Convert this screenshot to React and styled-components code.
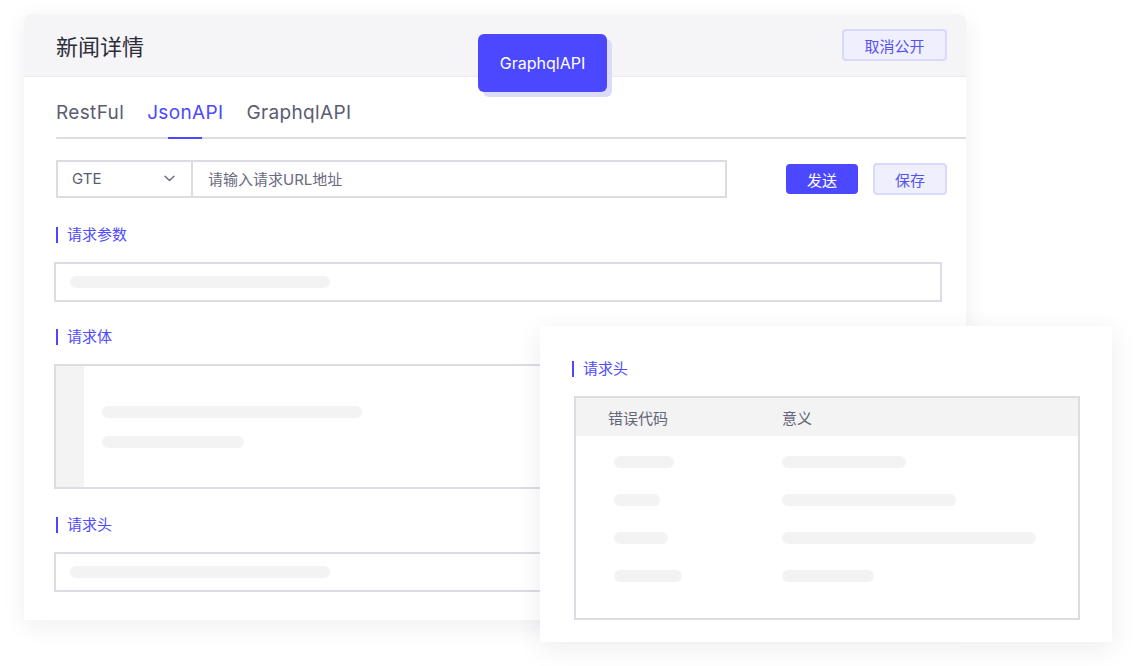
import React from "react";
import styled, { createGlobalStyle, css } from "styled-components";

const Global = createGlobalStyle`
  html, body { margin: 0; padding: 0; background: #ffffff; }
  body { font-family: Inter, "Noto Sans CJK SC", "Noto Sans", sans-serif; }
  * { box-sizing: border-box; }
`;

const PRIMARY = "#4b48ff";
const LINE = "#dcdce4";
const SKEL = "#f3f3f4";

const Stage = styled.div`
  position: relative;
  width: 1136px;
  height: 666px;
  overflow: hidden;
  padding: 14px 0 0 24px;
`;

const Card = styled.div`
  width: 942px;
  background: #fff;
  border-radius: 8px 8px 0 0;
  box-shadow: 0 6px 24px rgba(30, 30, 70, 0.07);
  padding-bottom: 28px;
`;

const Header = styled.div`
  height: 63px;
  display: flex;
  align-items: center;
  justify-content: space-between;
  padding: 0 19px 0 32px;
  background: #f5f5f8;
  border-bottom: 1px solid #ebebf0;
  border-radius: 8px 8px 0 0;
`;

const Title = styled.h1`
  margin: 0;
  font-size: 22px;
  font-weight: 400;
  color: #2d2d3a;
  line-height: 30px;
  padding-top: 4px;
`;

const GhostButton = styled.button`
  width: ${(p) => p.$w}px;
  height: 32px;
  border: 2px solid #d9d9fb;
  background: #efeffd;
  border-radius: 4px;
  color: #5552f0;
  font-family: inherit;
  font-size: 15px;
  padding: 0;
  cursor: pointer;
`;

const PrimaryButton = styled.button`
  width: 72px;
  height: 30px;
  border: none;
  background: ${PRIMARY};
  border-radius: 4px;
  color: #fff;
  font-family: inherit;
  font-size: 15px;
  padding: 0;
  cursor: pointer;
`;

const Tabs = styled.div`
  margin-left: 32px;
  display: flex;
  gap: 23px;
  border-bottom: 2px solid ${LINE};
`;

const Tab = styled.div`
  position: relative;
  padding: 24px 0 12px;
  line-height: 24px;
  font-size: 19px;
  letter-spacing: 0.35px;
  color: ${(p) => (p.$active ? PRIMARY : "#5c5c72")};
  ${(p) =>
    p.$active &&
    css`
      &::after {
        content: "";
        position: absolute;
        left: 50%;
        bottom: -2px;
        width: 34px;
        height: 2px;
        margin-left: -17px;
        background: ${PRIMARY};
      }
    `}
`;

const UrlRow = styled.div`
  margin-top: 21px;
  display: flex;
  align-items: center;
  justify-content: space-between;
  padding: 0 19px 0 32px;
`;

const UrlGroup = styled.div`
  width: 671px;
  height: 38px;
  border: 2px solid ${LINE};
  display: flex;
`;

const Select = styled.div`
  width: 135px;
  display: flex;
  align-items: center;
  justify-content: space-between;
  padding: 0 16px 2px 14px;
  border-right: 2px solid ${LINE};
  font-size: 15px;
  color: #5c5c70;
`;

const UrlInput = styled.div`
  flex: 1;
  display: flex;
  align-items: center;
  padding: 0 0 2px 15px;
  font-size: 15px;
  color: #6a6a7e;
`;

const Actions = styled.div`
  display: flex;
  align-items: center;
  gap: 15px;
`;

const Label = styled.div`
  display: flex;
  align-items: center;
  height: 16px;
  margin: ${(p) => p.$top ?? 28}px 0 0 ${(p) => p.$left ?? 32}px;
  font-size: 15px;
  line-height: 16px;
  color: #4f4cff;
  &::before {
    content: "";
    width: 2px;
    height: 16px;
    margin-right: 9px;
    background: ${PRIMARY};
  }
`;

const Box = styled.div`
  margin: 19px 0 0 30px;
  width: 888px;
  height: ${(p) => p.$h}px;
  border: 2px solid ${LINE};
  display: flex;
  align-items: center;
  padding: 0 14px;
`;

const CodeBox = styled.div`
  margin: 19px 0 0 30px;
  width: 888px;
  height: 125px;
  border: 2px solid ${LINE};
  display: flex;
`;

const Gutter = styled.div`
  width: 28px;
  background: #f3f3f3;
`;

const CodeLines = styled.div`
  display: flex;
  flex-direction: column;
  justify-content: center;
  gap: 18px;
  padding-left: 18px;
`;

const Skeleton = styled.div`
  width: ${(p) => p.$w}px;
  height: 12px;
  border-radius: 6px;
  background: ${SKEL};
  margin-left: ${(p) => p.$ml || 0}px;
`;

const FloatButton = styled.div`
  position: absolute;
  left: 478px;
  top: 34px;
  width: 129px;
  height: 58px;
  border-radius: 6px;
  background: ${PRIMARY};
  box-shadow: 5px 5px 0 #dcdcfa;
  color: #fff;
  font-size: 16px;
  display: flex;
  align-items: center;
  justify-content: center;
`;

const Overlay = styled.div`
  position: absolute;
  left: 540px;
  top: 326px;
  width: 572px;
  height: 316px;
  background: #fff;
  box-shadow: 0 6px 26px rgba(30, 30, 70, 0.08);
  padding: 35px 32px 22px;
`;

const Table = styled.div`
  margin: 19px 0 0 2px;
  width: 506px;
  height: 224px;
  border: 2px solid ${LINE};
`;

const Row = styled.div`
  display: grid;
  grid-template-columns: 174px 1fr;
  align-items: center;
  height: 38px;
  padding-left: 32px;
`;

const HeadRow = styled(Row)`
  background: #f3f3f3;
  font-size: 15px;
  color: #64647a;
`;

const TableBody = styled.div`
  padding-top: 7px;
`;

const Chevron = () => (
  <svg width="11" height="7" viewBox="0 0 11 7" fill="none">
    <path d="M1 1.2 L5.5 5.5 L10 1.2" stroke="#6b6b80" strokeWidth="1.4" strokeLinecap="round" strokeLinejoin="round" />
  </svg>
);

const rows = [
  [60, 124],
  [46, 174],
  [54, 254],
  [68, 92],
];

export default function App() {
  return (
    <>
      <Global />
      <Stage>
        <Card>
          <Header>
            <Title>新闻详情</Title>
            <GhostButton $w={105}>取消公开</GhostButton>
          </Header>
          <Tabs>
            <Tab>RestFul</Tab>
            <Tab $active>JsonAPI</Tab>
            <Tab>GraphqlAPI</Tab>
          </Tabs>
          <UrlRow>
            <UrlGroup>
              <Select>
                <span>GTE</span>
                <Chevron />
              </Select>
              <UrlInput>请输入请求URL地址</UrlInput>
            </UrlGroup>
            <Actions>
              <PrimaryButton>发送</PrimaryButton>
              <GhostButton $w={74}>保存</GhostButton>
            </Actions>
          </UrlRow>

          <Label $top={29}>请求参数</Label>
          <Box $h={40}>
            <Skeleton $w={260} />
          </Box>

          <Label $top={27}>请求体</Label>
          <CodeBox>
            <Gutter />
            <CodeLines>
              <Skeleton $w={260} />
              <Skeleton $w={142} />
            </CodeLines>
          </CodeBox>

          <Label>请求头</Label>
          <Box $h={40}>
            <Skeleton $w={260} />
          </Box>
        </Card>

        <FloatButton>GraphqlAPI</FloatButton>

        <Overlay>
          <Label $top={0} $left={0}>请求头</Label>
          <Table>
            <HeadRow>
              <span>错误代码</span>
              <span>意义</span>
            </HeadRow>
            <TableBody>
              {rows.map(([a, b], i) => (
                <Row key={i}>
                  <Skeleton $w={a} $ml={6} />
                  <Skeleton $w={b} />
                </Row>
              ))}
            </TableBody>
          </Table>
        </Overlay>
      </Stage>
    </>
  );
}
